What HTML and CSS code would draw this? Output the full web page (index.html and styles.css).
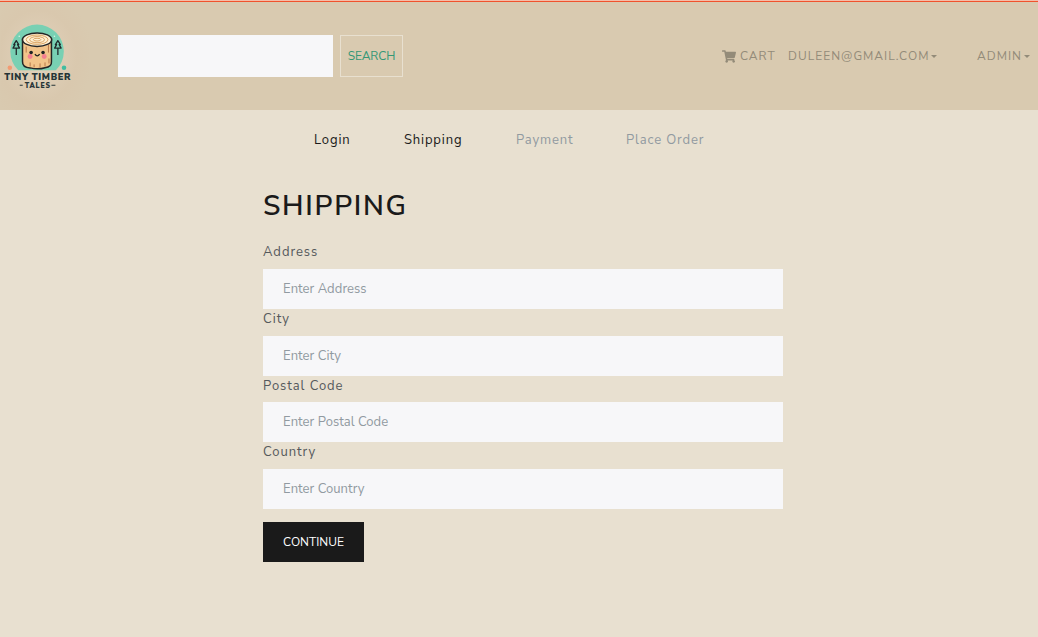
FILE: index.html
```html
<!DOCTYPE html>
<html lang="en">
<head>
<meta charset="utf-8">
<title>Shipping | Tiny Timber Tales</title>
<link rel="stylesheet" href="styles.css">
</head>
<body>
<header class="navbar">
  <a class="brand" href="#">
    <svg class="logo" viewBox="0 0 90 108" role="img" aria-label="Tiny Timber Tales">
      <defs>
        <radialGradient id="glow" cx="42%" cy="50%" r="62%">
          <stop offset="0" stop-color="#e2d3bd"/>
          <stop offset=".7" stop-color="#d9c8ae"/>
          <stop offset="1" stop-color="#d9cab0"/>
        </radialGradient>
      </defs>
      <rect width="90" height="108" fill="url(#glow)"/>
      <path d="M18 68A27 27 0 1 1 56 68Z" fill="#78d0b3"/>
      <g transform="translate(0 -1)">
        <path d="M16 39l-2.500 4h1.200l-2 3.500h6.600l-2-3.500h1.200zM16 46.500v7M58 39l-2.500 4h1.200l-2 3.500h6.600l-2-3.500h1.200zM58 46.500v7" fill="none" stroke="#202a2b" stroke-width="1.300" stroke-linejoin="round"/>
        <path d="M22.300 37.500V60Q22 66 30 66.500Q38 68.500 45 66.300Q52 65.500 51.500 60V37.500Z" fill="#f2c48a" stroke="#252626" stroke-width="1.500"/>
        <path d="M26 45v6M48.500 43v8M30 61v4M34 63v3M40 62v4M45 61v4M49 57v5" stroke="#a9653b" stroke-width=".8"/>
        <ellipse cx="37" cy="38" rx="14.700" ry="6.800" fill="#fff0d3" stroke="#252626" stroke-width="1.500"/>
        <g fill="none" stroke="#d69b57" stroke-width=".9">
          <ellipse cx="37" cy="38" rx="11" ry="4.700"/>
          <ellipse cx="37" cy="38" rx="7.500" ry="3.100"/>
          <ellipse cx="37" cy="38" rx="3.800" ry="1.400"/>
        </g>
        <circle cx="30" cy="55" r="2.500" fill="#f47f91"/>
        <circle cx="44.200" cy="55" r="2.500" fill="#f47f91"/>
        <circle cx="31" cy="51" r="1.800" fill="#202323"/>
        <circle cx="43" cy="51" r="1.800" fill="#202323"/>
        <path d="M34.800 52.500q2.400 3.600 4.800 0" fill="none" stroke="#202323" stroke-width="1.300"/>
        <circle cx="19" cy="34.500" r=".8" fill="#d9f4e4"/>
        <circle cx="54.500" cy="34.500" r=".8" fill="#d9f4e4"/>
      </g>
      <circle cx="9.500" cy="65.300" r="2.300" fill="#f29b73"/>
      <circle cx="64.200" cy="65.300" r="2.300" fill="#40bda1"/>
      <g class="logo-type">
        <text x="3.800" y="78.200" font-size="9.300" textLength="67">TINY TIMBER</text>
        <text x="24.500" y="85.800" font-size="7" textLength="25.500">TALES</text>
      </g>
      <path d="M19.500 83h3M51.500 83h4" stroke="#263537" stroke-width="1.100"/>
    </svg>
  </a>
  <form class="search">
    <input class="search-input" type="text" aria-label="Search">
    <button class="search-button" type="button">SEARCH</button>
  </form>
  <nav class="account">
    <a class="nav-link cart" href="#"><svg class="cart-icon" viewBox="0 0 576 512"><path fill="currentColor" d="M528.100 301.300l47.300-208C578.800 78.300 567.400 64 552 64H159.200l-9.200-44.800C147.800 8 137.900 0 126.500 0H24C10.700 0 0 10.700 0 24v16c0 13.300 10.700 24 24 24h69.900l70.200 343.400C147.300 417.100 136 435.200 136 456c0 30.900 25.100 56 56 56s56-25.100 56-56c0-15.700-6.400-29.800-16.800-40h209.600C430.400 426.200 424 440.300 424 456c0 30.900 25.100 56 56 56s56-25.100 56-56c0-22.200-12.900-41.300-31.600-50.400l5.500-24.300c3.400-15-8-29.300-23.400-29.300H218.100l-6.500-32h293.100c11.200 0 20.900-7.800 23.400-18.700z"/></svg><span class="cart-text">CART</span></a>
    <a class="nav-link user" href="#"><span class="user-text">DULEEN@GMAIL.COM</span><i class="caret"></i></a>
    <a class="nav-link admin" href="#"><span class="admin-text">ADMIN</span><i class="caret"></i></a>
  </nav>
</header>
<main class="page">
  <nav class="steps">
    <a class="step step-login" href="#">Login</a>
    <a class="step step-shipping" href="#">Shipping</a>
    <span class="step step-payment disabled">Payment</span>
    <span class="step disabled">Place Order</span>
  </nav>
  <form class="shipping">
    <h1 class="title">SHIPPING</h1>
    <label class="label" for="address">Address</label>
    <input class="field" id="address" type="text" placeholder="Enter Address">
    <label class="label label-city" for="city">City</label>
    <input class="field" id="city" type="text" placeholder="Enter City">
    <label class="label label-postal" for="postal">Postal Code</label>
    <input class="field" id="postal" type="text" placeholder="Enter Postal Code">
    <label class="label" for="country">Country</label>
    <input class="field" id="country" type="text" placeholder="Enter Country">
    <button class="continue" type="button">CONTINUE</button>
  </form>
</main>
</body>
</html>
```
FILE: styles.css
```css
* { box-sizing: border-box; }

body {
  margin: 0;
  min-height: 637px;
  background: #e8e0d0;
  color: #55595c;
  font-family: "Nunito Sans", "Open Sans", sans-serif;
  font-size: 13px;
  overflow: hidden;
}

a { color: inherit; text-decoration: none; }

input, button { font-family: inherit; border: 0; border-radius: 0; margin: 0; }

.navbar {
  display: flex;
  align-items: center;
  height: 110px;
  padding: 1px 8px 0 0;
  background: #d9cab0;
  border-top: 1px solid #f5bda8;
  box-shadow: inset 0 1px #f0532d;
}

.brand, .logo { display: block; width: 90px; height: 108px; }

.brand { padding-top: 1px; }

.logo { height: 107px; }

.logo-type { font-family: "Nunito Sans", Lato, sans-serif; font-weight: 900; fill: #263537; }

.search { display: flex; gap: 7px; margin-left: 28px; }

.search-input { width: 215px; height: 42px; background: #f7f7f9; }

.search-button {
  width: 63px;
  height: 42px;
  padding: 0;
  border: 1px solid #e8e0d0;
  background: transparent;
  color: #349776;
  font-size: 12px;
  letter-spacing: -0.1px;
}

.account {
  display: flex;
  align-items: center;
  width: 308px;
  margin-left: auto;
  color: #938b79;
  font-size: 12px;
}

.nav-link { display: flex; align-items: center; white-space: nowrap; letter-spacing: 1px; }

.cart { width: 66px; }

.cart-icon { width: 14px; height: 13px; margin-right: 4px; }

.user { width: 189px; }

.caret {
  width: 0;
  margin-left: 2px;
  border: 3px solid transparent;
  border-top: 3px solid currentColor;
  border-bottom: 0;
}

.steps {
  display: flex;
  height: 60px;
  padding-left: 314px;
  align-items: center;
  color: #1a1a1a;
  letter-spacing: 0.85px;
}

.step-login { width: 90px; }

.step-shipping { width: 112px; }

.step-payment { width: 110px; }

.disabled { color: #919aa1; }

.shipping { display: flex; flex-direction: column; width: 520px; margin-left: 263px; }

.title {
  height: 72px;
  margin: 0;
  padding-top: 16px;
  color: #1a1a1a;
  font-size: 28px;
  font-weight: 600;
  line-height: 40px;
  letter-spacing: 1.7px;
}

.label { height: 27px; line-height: 20px; letter-spacing: 0.95px; }

.label-postal { height: 26px; }

.field {
  width: 520px;
  height: 40px;
  padding: 0 20px;
  background: #f7f7f9;
  font-size: 13px;
  letter-spacing: 0.05px;
}

.field::placeholder { color: #919aa1; opacity: 1; }

.continue {
  width: 101px;
  height: 40px;
  margin-top: 13px;
  padding: 0;
  background: #1a1a1a;
  color: #fff;
  font-size: 12px;
}
```
